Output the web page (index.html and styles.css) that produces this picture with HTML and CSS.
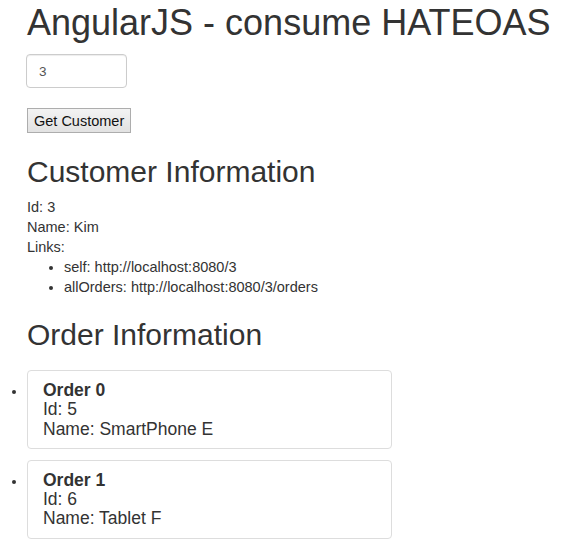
FILE: index.html
```html
<!DOCTYPE html>
<html>
<head>
<meta charset="utf-8">
<link rel="stylesheet" href="styles.css">
</head>
<body>
<div class="page">
  <h1 class="title">AngularJS - consume HATEOAS</h1>
  <div class="form">
    <input class="id-input" type="text" value="3">
    <button class="btn">Get Customer</button>
  </div>
  <h2 class="section">Customer Information</h2>
  <div class="info">
    <div>Id: 3</div>
    <div>Name: Kim</div>
    <div>Links:</div>
    <ul class="links">
      <li>self: http://localhost:8080/3</li>
      <li>allOrders: http://localhost:8080/3/orders</li>
    </ul>
  </div>
  <h2 class="section orders-title">Order Information</h2>
  <ul class="orders">
    <li>
      <div class="card">
        <div class="card-title">Order 0</div>
        <div>Id: 5</div>
        <div>Name: SmartPhone E</div>
      </div>
    </li>
    <li>
      <div class="card">
        <div class="card-title">Order 1</div>
        <div>Id: 6</div>
        <div>Name: Tablet F</div>
      </div>
    </li>
  </ul>
</div>
</body>
</html>
```

FILE: styles.css
```css
html, body {
  margin: 0;
  padding: 0;
  background: #fff;
}
body {
  font-family: "Liberation Sans", Arial, sans-serif;
  font-size: 14px;
  line-height: 20px;
  color: #333;
}
.page {
  padding: 3px 0 0 27px;
}
.title {
  font-size: 36px;
  font-weight: normal;
  line-height: 40px;
  margin: 0 0 11px 0;
  white-space: nowrap;
}
.form {
  display: flex;
  flex-direction: column;
  align-items: flex-start;
}
.id-input {
  box-sizing: border-box;
  width: 101px;
  height: 34px;
  margin-left: -1px;
  padding: 6px 12px;
  font-family: "Liberation Sans", Arial, sans-serif;
  font-size: 13.5px;
  color: #555;
  border: 1px solid #ccc;
  border-radius: 4px;
  box-shadow: inset 0 1px 1px rgba(0,0,0,.075);
  outline: none;
}
.btn {
  margin-top: 20px;
  box-sizing: border-box;
  height: 25px;
  padding: 0 6px;
  font-family: "Liberation Sans", Arial, sans-serif;
  font-size: 14.5px;
  color: #111;
  background: linear-gradient(#f3f3f3, #e2e2e2);
  border: 1px solid #adadad;
  border-radius: 0;
}
.section {
  font-size: 30px;
  font-weight: normal;
  line-height: 33px;
  margin: 22px 0 9px 0;
}
.info {
  font-size: 14.5px;
  line-height: 20px;
}
.links {
  margin: 0;
  padding-left: 37px;
}
.orders-title {
  margin-top: 21px;
  margin-bottom: 19px;
}
.orders {
  list-style: disc;
  margin: 0;
  padding: 0;
}
.orders li {
  margin-bottom: 11px;
}
.card {
  box-sizing: border-box;
  width: 365px;
  border: 1px solid #ddd;
  border-radius: 4px;
  padding: 10px 15px 9px 15px;
  font-size: 17.5px;
  line-height: 19.3px;
}
.card-title {
  font-weight: bold;
}
```
